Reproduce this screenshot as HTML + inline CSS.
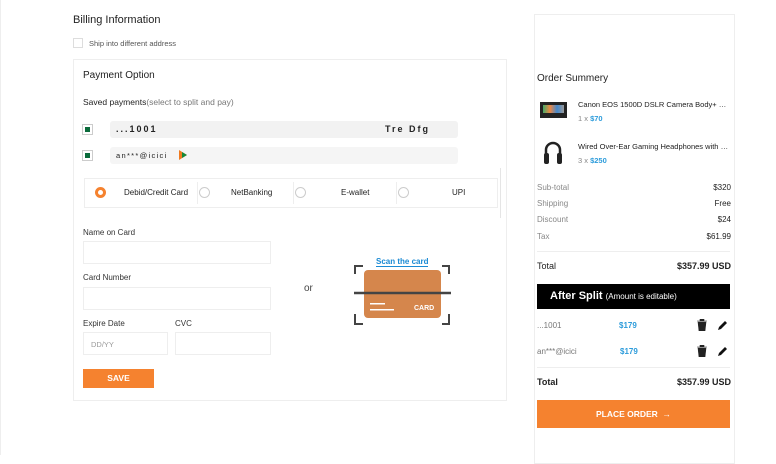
<!DOCTYPE html>
<html><head><meta charset="utf-8"><style>
*{margin:0;padding:0;box-sizing:border-box}
body{width:776px;height:455px;background:#fff;font-family:"Liberation Sans",sans-serif;color:#222;position:relative;overflow:hidden}
.a{position:absolute;white-space:nowrap}
.inp{position:absolute;border:1px solid #eee;background:#fff}
.lbl{position:absolute;font-size:8px;color:#333}
.rad{position:absolute;width:11px;height:11px;border:1px solid #ccc;border-radius:50%}
.r{position:absolute;font-size:8px}
.el{overflow:hidden;text-overflow:ellipsis;width:151px}
</style></head><body>
<div class="a" style="left:0;top:0;width:1px;height:455px;background:#eee"></div>
<div class="a" style="left:73px;top:14px;font-size:11px;color:#222">Billing Information</div>
<div class="a" style="left:73px;top:38px;width:10px;height:10px;border:1px solid #ddd"></div>
<div class="a" style="left:89px;top:39px;font-size:7.5px;color:#555">Ship into different address</div>
<div class="a" style="left:73px;top:59px;width:434px;height:342px;border:1px solid #eee"></div>
<div class="a" style="left:83px;top:70px;font-size:10px">Payment Option</div>
<div class="a" style="left:83px;top:97px;font-size:8.5px;color:#222">Saved payments<span style="color:#777">(select to split and pay)</span></div>
<div class="a" style="left:82px;top:124px;width:11px;height:11px;border:1px solid #ccc;padding:2px"><div style="width:5px;height:5px;background:#0a6b3b"></div></div>
<div class="a" style="left:110px;top:121px;width:348px;height:17px;background:#f2f2f2;border-radius:3px"></div>
<div class="a" style="left:116px;top:124px;font-size:9px;letter-spacing:2px;font-weight:bold">...1001</div>
<div class="a" style="left:385px;top:124px;font-size:9px;letter-spacing:2px;font-weight:bold">Tre Dfg</div>
<div class="a" style="left:82px;top:150px;width:11px;height:11px;border:1px solid #ccc;padding:2px"><div style="width:5px;height:5px;background:#0a6b3b"></div></div>
<div class="a" style="left:110px;top:147px;width:348px;height:17px;background:#f5f5f5;border-radius:3px"></div>
<div class="a" style="left:116px;top:151px;font-size:7.5px;letter-spacing:1.3px">an***@icici</div>
<svg class="a" style="left:178px;top:150px" width="10" height="10"><polygon points="1,0 9,5 1,10" fill="#f07a20"/><polygon points="4,2 9,5 4,8" fill="#138a3a"/></svg>
<div class="a" style="left:500px;top:168px;width:1px;height:50px;background:#e5e5e5"></div>
<div class="a" style="left:84px;top:178px;width:414px;height:30px;border:1px solid #eee"></div>
<div class="a" style="left:95px;top:187px;width:11px;height:11px;border-radius:50%;border:3px solid #f5822f;background:#fff"></div>
<div class="a" style="left:124px;top:188px;font-size:8px">Debid/Credit Card</div>
<div class="a" style="left:197px;top:182px;width:1px;height:22px;background:#eee"></div>
<div class="rad" style="left:199px;top:187px"></div>
<div class="a" style="left:231px;top:188px;font-size:8px">NetBanking</div>
<div class="a" style="left:293px;top:182px;width:1px;height:22px;background:#eee"></div>
<div class="rad" style="left:295px;top:187px"></div>
<div class="a" style="left:341px;top:188px;font-size:8px">E-wallet</div>
<div class="a" style="left:396px;top:182px;width:1px;height:22px;background:#eee"></div>
<div class="rad" style="left:398px;top:187px"></div>
<div class="a" style="left:452px;top:188px;font-size:8px">UPI</div>
<div class="lbl" style="left:83px;top:228px">Name on Card</div>
<div class="inp" style="left:83px;top:241px;width:188px;height:23px"></div>
<div class="lbl" style="left:83px;top:273px">Card Number</div>
<div class="inp" style="left:83px;top:287px;width:188px;height:23px"></div>
<div class="lbl" style="left:83px;top:319px">Expire Date</div>
<div class="inp" style="left:83px;top:332px;width:85px;height:23px"></div>
<div class="a" style="left:91px;top:340px;font-size:7.5px;color:#999">DD/YY</div>
<div class="lbl" style="left:175px;top:319px">CVC</div>
<div class="inp" style="left:175px;top:332px;width:96px;height:23px"></div>
<div class="a" style="left:83px;top:369px;width:71px;height:19px;background:#f5822f;color:#fff;font-size:8.5px;font-weight:bold;text-align:center;line-height:19px">SAVE</div>
<div class="a" style="left:304px;top:283px;font-size:10px;color:#444">or</div>
<div class="a" style="left:376px;top:257px;font-size:8px;font-weight:bold;color:#1a8ad4;border-bottom:1px solid #1a8ad4">Scan the card</div>
<svg class="a" style="left:354px;top:264px" width="97" height="62">
<g fill="none" stroke="#444" stroke-width="2"><path d="M1,10V2H9"/><path d="M88,2H95V10"/><path d="M1,50V60H9"/><path d="M88,60H95V50"/></g>
<rect x="10" y="6" width="77" height="48" rx="4" fill="#d5864c"/>
<line x1="0" y1="29" x2="97" y2="29" stroke="#444" stroke-width="2.5"/>
<rect x="16" y="39" width="15" height="1.5" fill="#fff"/><rect x="16" y="45" width="24" height="1.5" fill="#fff"/>
<text x="60" y="46" font-size="7" font-weight="bold" fill="#fff" font-family="Liberation Sans">CARD</text>
</svg>
<div class="a" style="left:534px;top:14px;width:201px;height:450px;border:1px solid #eee"></div>
<div class="a" style="left:537px;top:73px;font-size:10px">Order Summery</div>
<div class="a" style="left:540px;top:102px;width:27px;height:16px;background:#222"><div style="margin:3px;height:8px;background:linear-gradient(90deg,#4a6,#e84,#48c,#999)"></div></div>
<div class="a el" style="left:578px;top:100px;font-size:7.5px">Canon EOS 1500D DSLR Camera Body+ 18-55mm</div>
<div class="a" style="left:578px;top:114px;font-size:7.5px;color:#888">1 x <b style="color:#2d9cdb">$70</b></div>
<svg class="a" style="left:543px;top:140px" width="20" height="26"><path d="M3,14V10a7,7 0 0 1 14,0v4" fill="none" stroke="#222" stroke-width="2.5"/><rect x="1" y="13" width="5" height="11" rx="2" fill="#222"/><rect x="14" y="13" width="5" height="11" rx="2" fill="#222"/></svg>
<div class="a el" style="left:578px;top:142px;font-size:7.5px">Wired Over-Ear Gaming Headphones with USB</div>
<div class="a" style="left:578px;top:156px;font-size:7.5px;color:#888">3 x <b style="color:#2d9cdb">$250</b></div>
<div class="r" style="left:537px;top:183px;color:#888">Sub-total</div><div class="r" style="right:45px;top:183px">$320</div>
<div class="r" style="left:537px;top:199px;color:#888">Shipping</div><div class="r" style="right:45px;top:199px">Free</div>
<div class="r" style="left:537px;top:215px;color:#888">Discount</div><div class="r" style="right:45px;top:215px">$24</div>
<div class="r" style="left:537px;top:232px;color:#888">Tax</div><div class="r" style="right:45px;top:232px">$61.99</div>
<div class="a" style="left:537px;top:251px;width:193px;height:1px;background:#eee"></div>
<div class="a" style="left:537px;top:261px;font-size:9px">Total</div><div class="a" style="right:45px;top:261px;font-size:9px;font-weight:bold">$357.99 USD</div>
<div class="a" style="left:537px;top:284px;width:193px;height:25px;background:#000;color:#fff;font-size:11px;font-weight:bold;line-height:25px;padding-left:13px">After Split <span style="font-size:8px;font-weight:normal">(Amount is editable)</span></div>
<div class="r" style="left:537px;top:321px;color:#777">...1001</div><div class="r" style="left:619px;top:321px;color:#2d9cdb;font-weight:bold">$179</div>
<div class="r" style="left:537px;top:347px;color:#777">an***@icici</div><div class="r" style="left:620px;top:347px;color:#2d9cdb;font-weight:bold">$179</div>
<svg class="a" style="left:697px;top:319px" width="10" height="12"><path d="M0,2h10M3,2V0h4v2M1,3h8l-1,9H2z" fill="#222" stroke="#222" stroke-width=".6"/></svg>
<svg class="a" style="left:697px;top:345px" width="10" height="12"><path d="M0,2h10M3,2V0h4v2M1,3h8l-1,9H2z" fill="#222" stroke="#222" stroke-width=".6"/></svg>
<svg class="a" style="left:718px;top:320px" width="10" height="10"><path d="M0,10l1-3 6-6 2 2-6 6z" fill="#111"/></svg>
<svg class="a" style="left:718px;top:346px" width="10" height="10"><path d="M0,10l1-3 6-6 2 2-6 6z" fill="#111"/></svg>
<div class="a" style="left:537px;top:367px;width:193px;height:1px;background:#eee"></div>
<div class="a" style="left:537px;top:377px;font-size:9px;font-weight:bold">Total</div><div class="a" style="right:45px;top:377px;font-size:9px;font-weight:bold">$357.99 USD</div>
<div class="a" style="left:537px;top:400px;width:193px;height:28px;background:#f5822f;color:#fff;font-size:8.5px;font-weight:bold;text-align:center;line-height:28px">PLACE ORDER &nbsp;→</div>
</body></html>
